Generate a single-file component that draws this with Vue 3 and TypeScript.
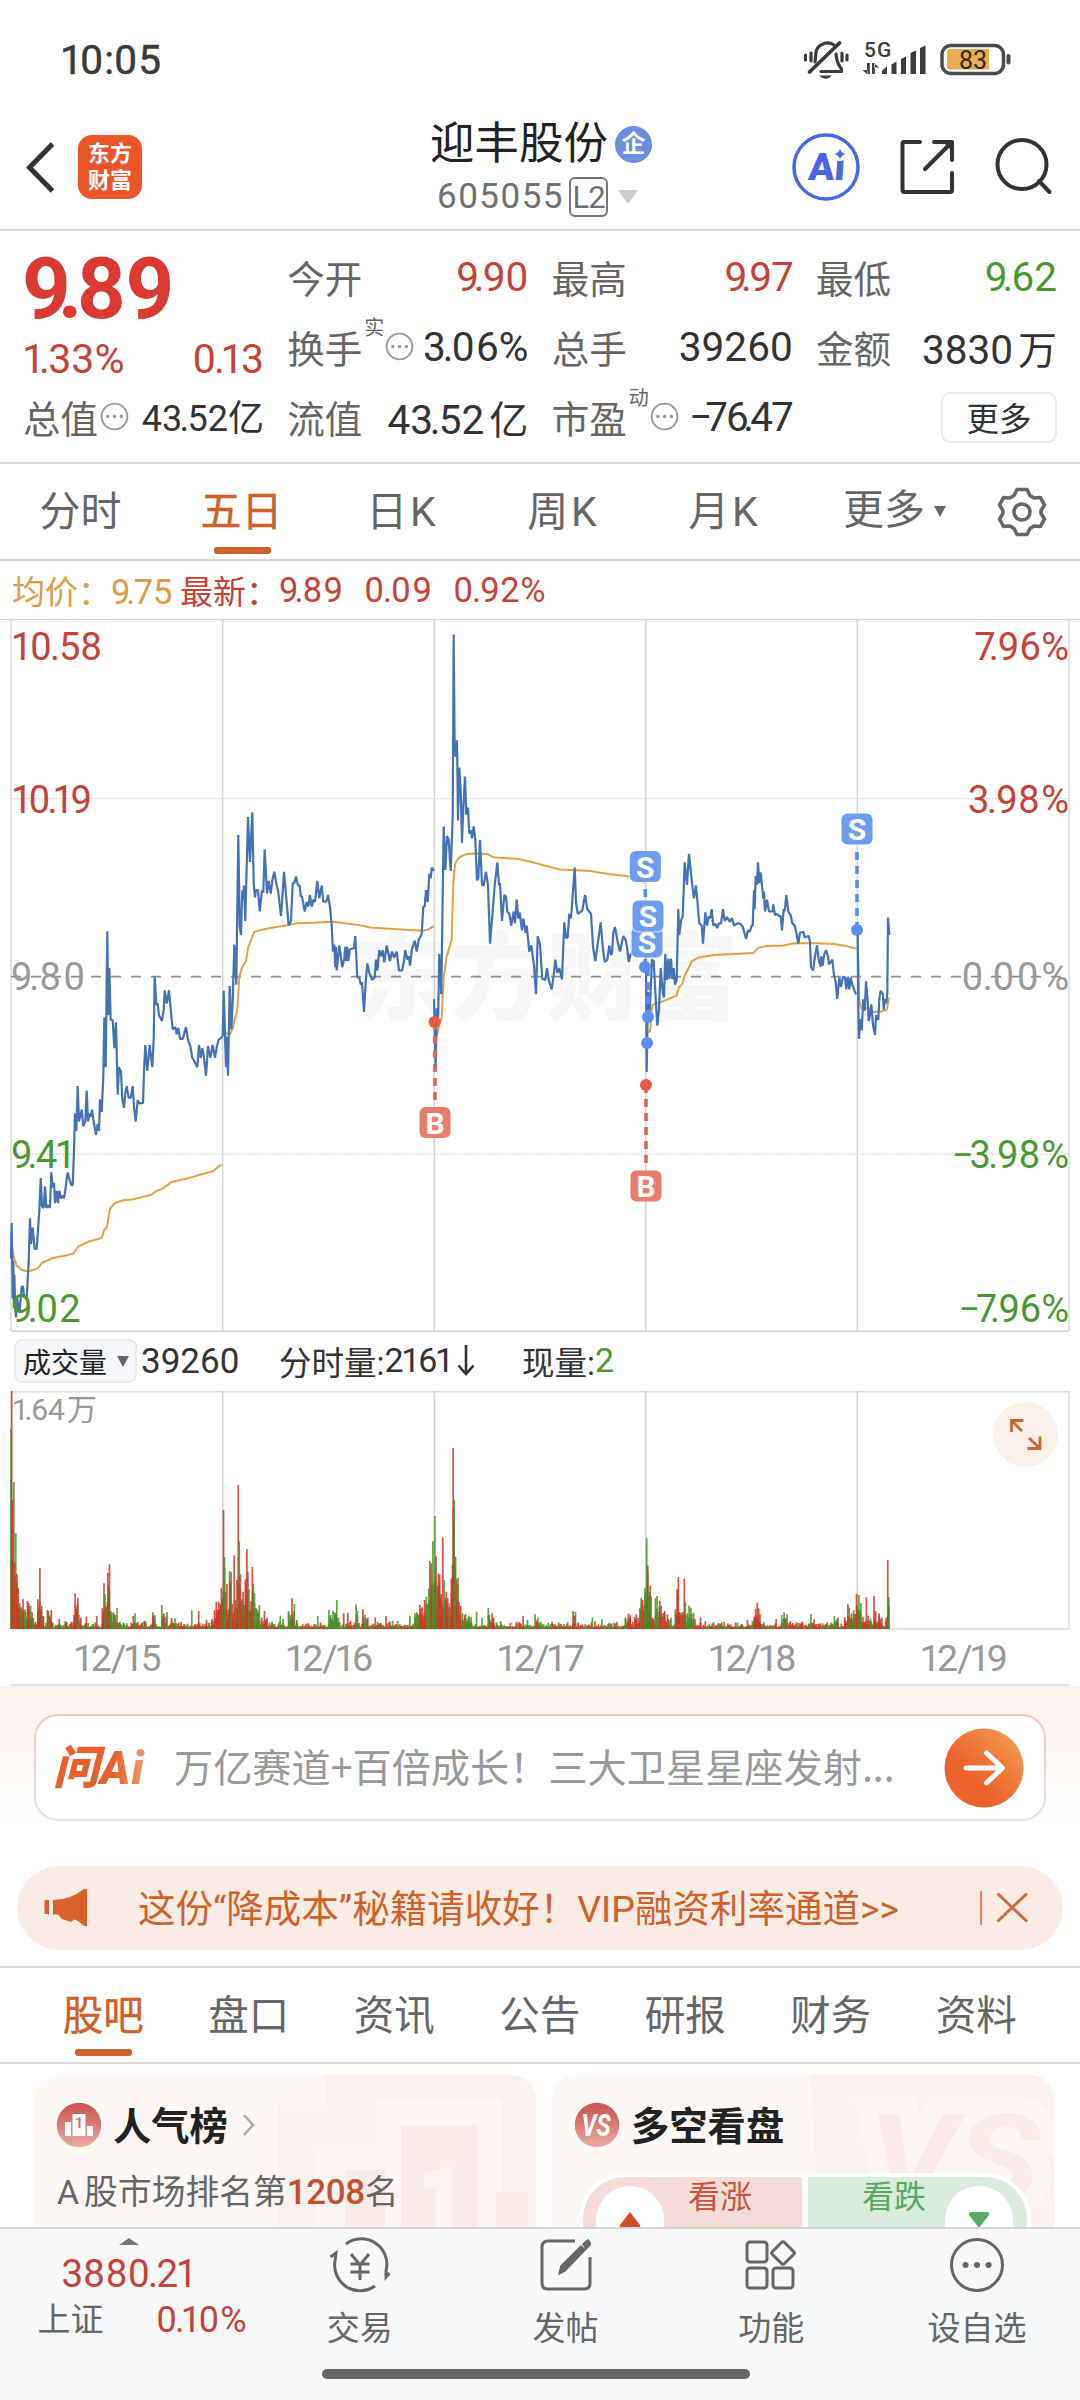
<script setup lang="ts">
import { h, type FunctionalComponent } from 'vue'

/* Tightens the gaps around decimal points and the digit one, in em. */
function kern(text: string): number[] {
  return [...text].map((c, i) => {
    const p = text[i - 1]
    if (!p) return 0
    let k = 0
    if (c === '.') k -= p === '7' ? 0.19 : p === '9' ? 0.13 : 0.08
    if (p === '.') k -= 0.04
    if (c === '1') k -= 0.065
    if (p === '1') k -= 0.065
    if (p === '0') k += 0.035
    if (p === '8') k += 0.02
    if (p === '−') k -= 0.12
    return k
  })
}

const Num: FunctionalComponent<{ v: string }> = (props) => {
  const ks = kern(props.v)
  return h(
    'span',
    { class: 'num' },
    [...props.v].map((c, i) => (ks[i] ? h('span', { style: { marginLeft: ks[i].toFixed(3) + 'em' } }, c) : c)),
  )
}
Num.props = ['v']

const dx = (text: string, size: number, extra = 0) =>
  kern(text).map((k, i) => (i ? k * size + extra : 0).toFixed(1)).join(' ')

/* Price lines: every day is a flat list of x,y pairs in plot units. */
const KX = 1 / 3
const KY = 1 / 2.119
function line(x0: number, raw: string): string {
  return raw
    .trim()
    .split(/\s+/)
    .map((p) => {
      const [x, y] = p.split(',').map(Number)
      return (x0 + x * KX).toFixed(1) + ',' + (600 + y * KY).toFixed(1)
    })
    .join(' ')
}

const priceLines = [
  line(0, `33,1395 35,1320 38,1480 40,1400 42,1500 43,1430 46,1500 48,1520 52,1480 55,1500 58,1510 62,1480 65,1455 69,1455 72,1475 80,1480 86,1400 90,1310 93,1365 98,1330 104,1375 110,1375 114,1335 118,1295 122,1225 126,1285 131,1288 135,1243 139,1288 144,1283 150,1288 154,1213 158,1245 162,1235 165,1278 170,1252 174,1278 178,1252 183,1268 188,1262 192,1268 197,1245 200,1225 203,1213 210,1232 215,1240 218,1240 222,1165 225,1088 229,1125 233,1030 237,1105 245,1080 250,1115 256,1105 260,1040 264,1105 269,1088 272,1095 276,1080 281,1105 288,1133 293,1110 297,1125 300,1058 305,1085 310,1010 313,885 317,990 322,702 325,880 328,780 332,890 338,890 343,950 348,895 353,1048 357,990 363,1000 367,1058 372,1076 376,1045 380,1030 386,1055 392,1055 398,1030 402,1075 407,1105 413,1060 418,1066 429,1066 432,1000 436,943 442,998 449,943 457,990 461,930 464,798 469,858 473,855 477,880 486,892 491,868 494,827 500,855 507,827 514,880 518,910 526,905 530,920 535,907 540,930 548,930 558,905 565,935 571,945 577,970 585,980 592,990 597,943 602,970 607,950 612,970 618,1008 624,945 631,970 638,943 645,970 651,945 656,932 668,925`),
  line(0, `668,925 671,828 678,990 680,925 684,1008 689,818 694,910 698,850 703,730 709,815 715,498 719,690 723,710 727,615 730,635 732,605 736,680 744,460 750,555 757,450 761,600 765,630 768,615 774,615 779,660 786,615 790,620 794,528 801,622 806,595 812,622 818,590 823,576 830,605 834,615 843,670 848,620 852,576 858,625 866,690 873,680 878,600 883,600 888,586 894,605 899,605 902,628 906,628 914,660 920,640 925,650 930,625 935,650 940,635 945,640 952,595 958,632 965,605 970,640 980,638 984,625 990,650 995,690 999,745 1003,730 1006,778 1008,735 1010,785 1018,732 1027,778 1033,760 1036,735 1039,765 1042,735 1045,765 1050,740 1062,738 1066,712 1072,800 1078,800 1082,815 1086,810 1092,873 1097,810 1102,770 1108,790 1116,805 1124,800 1128,762 1132,785 1138,742 1143,755 1148,742 1153,768 1160,732 1170,765 1176,745 1182,758 1190,745 1197,785 1206,785 1212,765 1216,742 1222,762 1226,755 1230,775 1236,740 1244,722 1250,745 1256,720 1265,708 1270,650 1274,650 1278,615 1283,640 1288,580 1292,590 1295,567 1302,574`),
  line(400, `102,846 107,990 110,865 114,905 118,750 124,835 131,480 136,572 141,500 146,508 152,574 158,460 161,73 164,330 168,330 171,297 174,467 178,355 182,405 186,515 190,440 195,374 199,455 204,440 208,495 213,488 216,505 221,480 226,508 231,594 235,590 240,508 246,604 251,605 258,576 264,605 270,728 277,670 284,605 292,556 297,605 300,600 306,680 313,625 318,628 322,660 328,665 334,690 341,660 345,685 350,635 355,675 359,662 366,700 370,675 377,705 380,690 388,745 394,732 402,775 408,835 413,712 420,730 427,803 436,805 441,780 446,805 455,825 461,795 466,762 472,790 478,780 486,804 493,683 498,716 503,715 508,665 513,675 518,625 524,567 528,640 533,665 547,658 555,625 562,655 573,665 579,735 586,765 592,735 602,683 608,735 614,767 622,762 628,732 633,752 636,748 640,705 645,693 654,728 660,745 670,712 677,720 681,735 686,767 692,750 706,745 712,720 720,712 735,745`),
  line(400, `738,745 740,1000 744,830 748,890 756,762 761,765 766,830 772,902 777,868 782,780 788,830 792,842 796,750 800,805 805,760 808,803 813,760 817,803 821,780 825,815 830,805 835,655 838,710 843,680 848,670 854,556 861,604 867,538 876,600 882,632 888,605 898,685 905,690 909,728 916,662 921,690 926,670 930,675 935,655 940,690 946,686 951,695 957,685 963,685 969,655 974,680 981,672 990,682 996,674 1002,690 1012,685 1020,686 1028,692 1038,718 1044,700 1049,703 1055,690 1058,690 1062,615 1064,655 1067,585 1071,603 1074,556 1078,600 1082,577 1086,605 1090,632 1092,618 1095,660 1101,635 1107,660 1118,660 1120,645 1125,668 1130,665 1138,670 1142,670 1146,700 1151,655 1154,660 1159,625 1165,660 1172,668 1177,685 1184,690 1189,705 1195,728 1200,705 1210,703 1214,715 1226,712 1230,725 1233,778 1239,785 1245,755 1251,732 1256,762 1262,777 1264,755 1268,775 1273,750 1278,742 1284,755 1287,772 1297,762 1302,795 1307,810 1312,845 1318,800 1323,820 1329,798 1335,800 1339,825 1343,798 1348,825 1352,800 1357,815 1362,825 1368,836`),
  line(720, `413,700 415,860 417,930 420,888 425,912 430,846 434,870 438,808 443,850 446,892 450,880 454,857 459,900 465,922 468,880 475,890 478,845 482,828 489,835 491,868 495,845 499,855 502,835 504,673 508,710`),
]

const averageLines = [
  line(0, `35,1365 42,1395 50,1410 65,1420 85,1423 105,1418 115,1415 125,1405 155,1395 190,1390 220,1385 235,1370 265,1360 305,1352 313,1335 321,1328 330,1290 345,1278 370,1272 400,1270 455,1260 470,1252 485,1248 515,1233 560,1226 600,1218 640,1210 656,1200 665,1197`),
  line(0, `670,922 676,918 690,920 698,908 705,885 712,870 718,800 725,780 738,765 745,735 753,720 763,703 790,698 820,694 870,688 890,685 940,684 1000,682 1080,689 1110,694 1180,697 1270,701 1285,698 1302,691`),
  line(400, `110,925 118,900 125,885 131,800 140,755 155,720 160,600 165,560 175,547 195,539 215,537 262,538 280,545 355,549 395,555 430,562 480,571 570,574 630,581 680,585 720,593 735,600`),
  line(400, `742,915 750,915 757,858 790,850 830,838 836,822 848,812 855,795 876,765 895,758 940,752 1060,748 1075,737 1100,733 1150,732 1180,728 1230,727 1300,729 1330,732 1370,739`),
  line(720, `413,705 418,850 424,865 445,865 460,873 485,872 500,868 508,842`),
]

/* Volume bars: x, top and direction (r up, g down); quiet minutes are filled in between. */
const volumeA = `32,327,g 34,213,r 36,540,r 40,486,g 42,728,r 46,640,g 49,762,r 53,803,r 57,850,r 61,860,g 67,838,r 73,868,g 80,843,r 84,850,r 89,857,g 93,876,r 97,893,g 103,905,r 110,838,r 116,743,r 121,857,g 126,888,r 138,870,r 149,870,r 172,897,r 190,903,r 207,905,r 215,885,r 218,820,r 226,833,r 229,885,g 235,893,r 251,890,r 281,888,r 297,864,r 302,790,r 305,823,g 313,758,r 318,733,r 316,798,g 322,873,g 330,876,g 340,864,g 348,905,g 387,888,r 392,880,g 400,905,r 420,902,r 444,877,r 450,885,g 470,855,g 475,880,r 485,876,g 498,893,g 508,895,g 526,905,r 557,871,g 577,873,r 600,900,r 615,897,r 623,870,r 628,846,r 635,845,r 643,803,r 649,570,r 652,711,g 655,815,g 659,792,r 663,868,r 667,753,r 671,757,g 675,852,r 680,706,r 684,840,g 688,780,r 692,495,r 695,664,g 698,763,r 703,838,g 706,815,r 710,855,g 713,778,r 717,687,r 720,757,r 723,808,g 729,843,r 733,741,r 736,792,g 739,820,g 743,864,g 747,868,g 753,855,g 760,893,r 768,873,r 775,893,r 790,905,g 814,887,g 822,897,g 838,873,g 848,835,r 855,852,g 862,900,g 923,888,g 955,870,g 960,885,g 967,873,g 978,840,g 983,893,g 998,880,r 1010,878,r 1018,903,r 1034,853,g 1038,873,g 1054,868,r 1060,885,g 1068,893,r 1090,892,r 1121,888,r 1140,902,g 1155,903,g 1190,888,g 1205,880,g 1210,877,g 1219,855,r 1226,862,r 1233,840,r 1238,830,g 1245,806,g 1248,723,g 1252,730,r 1257,664,g 1263,588,g 1266,709,r 1270,797,g 1273,760,r 1277,764,r 1281,822,r 1286,652,r 1290,780,g 1296,815,r 1300,835,r 1305,850,g 1311,775,r 1314,735,r 1316,384,r 1319,538,g 1323,710,g 1326,778,r 1330,773,g 1333,846,r 1338,857,r 1343,880,g 1352,882,g 1361,887,g 1368,890,g 1384,875,g 1400,893,g 1418,864,g 1429,880,r 1433,893,r 1454,903,g 1500,905,r 1519,888,r 1532,900,g 1554,883,g 1562,893,g`
const volumeB = `2,905,g 35,905,r 96,873,r 103,876,g 152,893,g 180,898,g 215,908,g 248,892,g 257,880,r 262,885,r 275,890,r 280,883,r 290,865,r 294,834,g 298,840,r 305,803,g 310,655,g 313,736,r 316,815,g 320,797,r 323,830,g 328,893,r 335,835,g 340,828,g 348,842,r 352,857,r 362,873,r 370,883,r 380,893,g 393,868,g 398,808,r 402,771,r 405,876,r 415,876,r 419,776,r 422,846,g 428,880,g 433,857,g 438,863,g 446,878,g 450,898,r 466,892,r 480,903,r 500,910,r 545,910,g 568,908,r 603,900,r 617,903,g 622,890,r 626,866,r 631,848,r 635,865,r 639,883,r 650,905,g 686,897,r 702,885,g 709,877,g 713,893,r 718,883,g 727,903,r 750,908,g 761,905,r 787,883,g 796,898,r 815,910,r 845,908,g 855,888,g 865,893,r 885,892,r 894,853,r 898,863,g 905,880,r 911,871,g 919,822,r 926,825,g 932,850,g 938,890,r 948,832,r 953,887,r 960,895,g 970,827,r 975,873,r 985,880,r 993,893,r 1005,893,r 1010,720,r 1013,832,g`

interface Bar { x: number; y: number; up: boolean }
const peaks: Bar[] = [
  ...volumeA.split(' ').map((s) => ({ s, x0: 0 })),
  ...volumeB.split(' ').map((s) => ({ s, x0: 540 })),
]
  .map(({ s, x0 }) => {
    const [x, y, c] = s.split(',')
    return { x: x0 + Number(x) / 2.904, y: 1320 + Number(y) / 3, up: c === 'r' }
  })
  .sort((a, b) => a.x - b.x)

let seed = 7
const rand = () => {
  seed = (seed * 16807) % 2147483647
  return seed / 2147483647
}
const BASE = 1629
const bars: Bar[] = []
for (let x = 11.5, i = 0; x < 889; x += 0.88) {
  while (i < peaks.length - 2 && peaks[i + 1].x < x) i++
  const a = peaks[i]
  const b = peaks[i + 1]
  const near = b.x - a.x < 4
  const env = near ? (BASE - Math.max(a.y, b.y)) * (0.35 + 0.6 * rand()) : 2 + 6 * rand() * rand()
  bars.push({ x, y: BASE - env, up: rand() > 0.42 })
}
bars.push(...peaks)
const gaps = [222.7, 434.3, 645.8, 857.3]

const axis = [
  { y: 659.5, l: '10.58', le: 0.3, r: '7.96%', re: 0.4, c: '#c5423a' },
  { y: 813, l: '10.19', le: -1, r: '3.98%', re: 0.7, c: '#c5423a' },
  { y: 990, l: '9.80', le: 1.8, r: '0.00%', re: 1.5, c: '#999999' },
  { y: 1167.5, l: '9.41', le: 0, r: '−3.98%', re: 0.3, c: '#4b9733' },
  { y: 1321.5, l: '9.02', le: 0.2, r: '−7.96%', re: 0, c: '#4b9733' },
]
const sells = [
  { x: 857, y: 829 },
  { x: 647, y: 942 },
  { x: 648, y: 916 },
  { x: 645.3, y: 866.5 },
]
const buys = [{ x: 435, y: 1122.5 }, { x: 646, y: 1186 }]
const dates = ['12/15', '12/16', '12/17', '12/18', '12/19']
const periods = ['分时', '五日', '日K', '周K', '月K']
const sections = ['股吧', '盘口', '资讯', '公告', '研报', '财务', '资料']
</script>

<template>
  <div class="app">
    <div class="status">
      <Num class="time" v="10:05" />
      <svg width="216" height="44" viewBox="800 38 216 44">
        <g fill="none" stroke="#3c3c3c" stroke-width="3.200" stroke-linecap="round" stroke-linejoin="round">
          <path d="M815 62 C816 54 815 48 821 45 C825 42.500 830 42.500 834 45 M836 54 C837 62 838 64 841.500 69 L841.500 71.500 H821" />
          <path d="M839.500 43 L809.500 72" stroke-width="3.800" />
          <path d="M811 53 V61 M805.500 55 V60 M842 53 V61 M847 55 V60" />
        </g>
        <path d="M819 75.500 H832 Q826 82 819 75.500Z" fill="#3c3c3c" />
        <text x="864" y="57" class="fiveg">5G</text>
        <g fill="#3c3c3c">
          <path d="M867 63h2.800v11h-2.800zM862.500 70l5 4.500v-4.500zM872 63h2.800v11h-2.800zM879 67.500l-5-4.500v4.500z" />
          <path d="M882 71l5-5v8h-5zM891.500 64.500l5-3v12.500h-5zM901 59l5-2.500v17.500h-5zM910.500 53l5.500-2.500v23.500h-5.500zM920 48l5.500-2.500v28.500h-5.500z" />
        </g>
        <rect x="942" y="45.500" width="61.500" height="28" rx="9" fill="#fff" stroke="#4b4b4b" stroke-width="3.500" />
        <path d="M950 49h39v20.500h-39q-3 0-3-3v-14.500q0-3 3-3z" fill="#e9ad54" />
        <path d="M1008.500 56v6.500" stroke="#4b4b4b" stroke-width="4" stroke-linecap="round" />
        <text x="973" y="69" text-anchor="middle" class="pct">83</text>
      </svg>
    </div>

    <header class="head">
      <svg class="back" width="30" height="56" viewBox="25 139 30 56"><path d="M52.500 144 L29.500 167.500 L52.500 191" fill="none" stroke="#333" stroke-width="5" /></svg>
      <div class="logo"><span>东方</span><span>财富</span></div>
      <div class="title">
        <div class="name">迎丰股份<span class="qi">企</span></div>
        <div class="code"><span class="digits">605055</span><span class="l2">L2</span><i class="tri"></i></div>
      </div>
      <svg class="tools" width="270" height="80" viewBox="790 127 270 80">
        <circle cx="826" cy="167" r="32" fill="none" stroke="#4767e6" stroke-width="3.500" />
        <text transform="translate(826 180) skewX(-4)" text-anchor="middle" class="aitext">Ai</text>
        <circle cx="840" cy="154" r="7" fill="#fff" />
        <path d="M840 148.500 Q841 153 845.500 154 Q841 155 840 159.500 Q839 155 834.500 154 Q839 153 840 148.500Z" fill="#4767e6" />
        <g fill="none" stroke="#333" stroke-width="4" stroke-linejoin="round" stroke-linecap="round">
          <path d="M920 142 H904 Q902.500 142 902.500 144 V190 Q902.500 192 904.500 192 H950 Q952 192 952 190 V173" /><path d="M934 142 H952 V160 M952 142 L925 169" />
          <circle cx="1022" cy="164.500" r="24.500" /><path d="M1039 181 L1049.500 192" />
        </g>
        <path d="M943 142H952V151Z" fill="#333" />
      </svg>
    </header>

    <section class="quote">
      <div class="qcol first">
        <div class="big"><Num v="9.89" /></div>
        <div class="chg red"><Num v="1.33%" /><Num v="0.13" /></div>
        <div class="row small"><label>总值<svg class="info" viewBox="0 0 30 30"><circle cx="15" cy="15" r="13.300" /><path d="M8 15h.1M15 15h.1M22 15h.1" /></svg></label><b><Num v="43.52" />亿</b></div>
      </div>
      <div class="qcol">
        <div class="row"><label>今开</label><b class="red"><Num v="9.90" /></b></div>
        <div class="row"><label>换手<sup>实</sup><svg class="info far" viewBox="0 0 30 30"><circle cx="15" cy="15" r="13.300" /><path d="M8 15h.1M15 15h.1M22 15h.1" /></svg></label><b><Num v="3.06%" /></b></div>
        <div class="row"><label>流值</label><b><Num v="43.52" /><u>亿</u></b></div>
      </div>
      <div class="qcol">
        <div class="row"><label>最高</label><b class="red nine"><Num v="9.97" /></b></div>
        <div class="row"><label>总手</label><b>39260</b></div>
        <div class="row"><label>市盈<sup>动</sup><svg class="info far" viewBox="0 0 30 30"><circle cx="15" cy="15" r="13.300" /><path d="M8 15h.1M15 15h.1M22 15h.1" /></svg></label><b class="tight"><Num v="−76.47" /></b></div>
      </div>
      <div class="qcol">
        <div class="row"><label>最低</label><b class="green"><Num v="9.62" /></b></div>
        <div class="row"><label>金额</label><b>3830<u>万</u></b></div>
        <div class="row end"><button class="more">更多</button></div>
      </div>
    </section>

    <nav class="periods">
      <div v-for="(p, i) in periods" :key="p" class="tab" :class="{ on: i === 1, wide: i > 1 }">{{ p }}</div>
      <div class="moretab"><span>更多</span><i class="tri dark"></i></div>
      <svg class="gear" width="52" height="52" viewBox="-26 -26 52 52">
        <path d="M-5 -22.500 H5 L8 -16.500 L12 -14 L18.500 -14.500 L22.500 -7 L19 -1.500 V1.500 L22.500 7 L18.500 14.500 L12 14 L8 16.500 L5 22.500 H-5 L-8 16.500 L-12 14 L-18.500 14.500 L-22.500 7 L-19 1.500 V-1.500 L-22.500 -7 L-18.500 -14.500 L-12 -14 L-8 -16.500Z" />
        <circle r="8" />
      </svg>
    </nav>

    <div class="legend">
      <span class="avg"><em>均价：</em><Num v="9.75" /></span>
      <span class="last red"><em>最新：</em><Num v="9.89" /><Num v="0.09" /><Num v="0.92%" /></span>
    </div>

    <svg class="plot" width="1080" height="713" viewBox="0 619 1080 713">
      <text x="546" y="1012" text-anchor="middle" class="mark">东方财富</text>
      <g stroke="#d4d4d4" stroke-width="1.500">
        <path d="M0 619.500 H1080 M11 1331.300 H1069" />
        <path v-for="x in gaps" :key="x" :d="`M${x} 620V1331`" />
        <path d="M11 620V1331M1069 620V1331" stroke="#e2e2e2" stroke-width="2" />
        <path d="M11 798.700H1069M11 1154.200H1069" stroke-dasharray="1.500 1.500" stroke-width="1.200" />
      </g>
      <path d="M11 976.600H1069" stroke="#8c8c8c" stroke-width="1.600" stroke-dasharray="10 10" />
      <polyline v-for="(l, i) in averageLines" :key="'a' + i" :points="l" fill="none" stroke="#e0a246" stroke-width="2" />
      <polyline v-for="(l, i) in priceLines" :key="'p' + i" :points="l" fill="none" stroke="#4472b5" stroke-width="2.200" stroke-linejoin="bevel" />
      <g stroke-width="3.600" stroke-dasharray="8 6">
        <path d="M435 1022V1105M646 1085V1168" stroke="#dd6552" />
        <path d="M857 852V930M645.300 889V965M648 968V1017" stroke="#5b8def" />
      </g>
      <g fill="#e35b47"><circle cx="434.500" cy="1022" r="6" /><circle cx="646" cy="1085" r="6" /></g>
      <g fill="#5b8fef"><circle cx="857" cy="930" r="6" /><circle cx="645" cy="967" r="6" /><circle cx="648" cy="1017" r="6" /><circle cx="647" cy="1043" r="6" /></g>
      <g v-for="(s, i) in sells" :key="'s' + i">
        <rect :x="s.x - 16.500" :y="s.y - 16.500" width="33" height="33" rx="7" fill="#fff" opacity=".7" />
        <rect :x="s.x - 15.500" :y="s.y - 15.500" width="31" height="31" rx="6" fill="#6c9df1" />
        <text :x="s.x" :y="s.y + 11" text-anchor="middle" class="flag">S</text>
      </g>
      <g v-for="(s, i) in buys" :key="'b' + i">
        <rect :x="s.x - 15.500" :y="s.y - 15.500" width="31" height="31" rx="6" fill="#e87d6d" />
        <text :x="s.x" :y="s.y + 11" text-anchor="middle" class="flag">B</text>
      </g>
      <g v-for="a in axis" :key="a.l" class="axis" :fill="a.c">
        <text x="11" :y="a.y" :dx="dx(a.l, 38, a.le)">{{ a.l }}</text>
        <text x="1069" :y="a.y" :dx="dx(a.r, 38, a.re)" text-anchor="end">{{ a.r }}</text>
      </g>
    </svg>

    <div class="volbar">
      <button class="volbtn">成交量<i class="tri dark"></i></button>
      <span class="v1">39260</span>
      <span class="v2">分时量:<Num v="2161" /><svg width="18" height="34" viewBox="0 0 18 34"><path d="M9 2V31M1.500 22.500L9 31L16.500 22.500" fill="none" stroke="#333" stroke-width="2.600" /></svg></span>
      <span class="v3">现量:<span class="green">2</span></span>
    </div>

    <svg class="plot" width="1080" height="240" viewBox="0 1391 1080 240">
      <g stroke="#dedede" stroke-width="1.500">
        <path d="M11 1391.700H1069M11 1629H1069M11 1391V1629M1069 1391V1629" />
        <path v-for="x in gaps" :key="x" :d="`M${x} 1391V1629`" stroke="#d0d0d0" />
      </g>
      <path v-for="(b, i) in bars" :key="i" :d="`M${b.x.toFixed(1)} 1629V${b.y.toFixed(1)}`" :stroke="b.up ? '#cf3527' : '#3f9426'" stroke-width="1.700" opacity=".85" />
      <text x="12" y="1420" class="vmax"><tspan :dx="dx('1.64', 30)">1.64</tspan><tspan dx="2">万</tspan></text>
      <circle cx="1025.500" cy="1434.500" r="32.500" fill="#fbf1eb" />
      <path d="M1011.500 1432V1420.500H1023.500M1011.500 1420.500L1022 1431M1029 1438L1040 1448.500M1040 1436.500V1448.500H1027.500" fill="none" stroke="#cb6331" stroke-width="2.800" />
    </svg>
    <div class="dates"><span v-for="d in dates" :key="d"><Num :v="d" /></span></div>

    <section class="ask">
      <div class="askbox">
        <span class="asklogo">问Ai</span>
        <span class="asktext">万亿赛道+百倍成长！三大卫星星座发射...</span>
        <svg width="80" height="80" viewBox="0 0 80 80">
          <defs><linearGradient id="go" x1=".2" y1=".8" x2=".9" y2=".1"><stop offset=".25" stop-color="#ec632c" /><stop offset="1" stop-color="#f29a50" /></linearGradient></defs>
          <circle cx="40" cy="40" r="39.500" fill="url(#go)" />
          <path d="M22 40H58M42.500 25L58.500 40L42.500 55" fill="none" stroke="#fff" stroke-width="5" stroke-linecap="round" stroke-linejoin="round" />
        </svg>
      </div>
    </section>

    <div class="banner">
      <svg width="46" height="40" viewBox="43 1888 46 40" fill="#d9622b"><path d="M44.500 1900h4.500v14h-4.500zM53 1900Q70 1900 84 1889H87V1926H84Q78 1920 74 1919.500L71 1922L62 1919L58 1914.500H53Z" /></svg>
      <span>这份“降成本”秘籍请收好！VIP融资利率通道&gt;&gt;</span>
      <svg width="50" height="36" viewBox="979 1890 50 36" fill="none" stroke="#d06a38"><path d="M981 1891V1925" stroke-width="1.500" /><path d="M997.500 1893.500L1027 1921.500M1027 1893.500L997.500 1921.500" stroke-width="3" /></svg>
    </div>

    <nav class="sections">
      <div v-for="(s, i) in sections" :key="s" class="tab" :class="{ on: i === 0 }">{{ s }}</div>
    </nav>

    <div class="cards">
      <div class="card">
        <svg class="art" width="502" height="152" viewBox="34 2075 502 152">
          <path d="M278 2227V2105H326V2075H536V2227Z" fill="#fbf2f0" />
          <path d="M316 2227V2151H376V2098H502V2227Z" fill="#fdf6f4" />
          <path d="M401 2125H478V2227H401ZM345 2170H385V2227H345ZM496 2192H528V2227H496Z" fill="#faebe9" />
          <path d="M424 2174L452 2166V2227H436V2186L424 2190Z" fill="#fdf4f2" />
        </svg>
        <div class="ctitle">
          <svg width="46" height="46" viewBox="0 0 46 46">
            <defs><linearGradient id="badge" x1="0" y1="0" x2="0" y2="1"><stop offset=".1" stop-color="#cb5a53" /><stop offset="1" stop-color="#eaaba6" /></linearGradient></defs>
            <circle cx="23" cy="23" r="22.300" fill="url(#badge)" />
            <path d="M9 20H15V34H9ZM31 24H37V34H31ZM16.500 12H29.500V34H16.500Z" fill="#fff" /><text x="23" y="26" text-anchor="middle" class="one">1</text>
          </svg>
          <span>人气榜</span>
          <svg class="chev" width="14" height="24" viewBox="0 0 14 24"><path d="M2 2L11 12L2 22" fill="none" stroke="#aaa" stroke-width="2.500" /></svg>
        </div>
        <div class="rank">A<span class="cn">股市场排名第</span><strong>1208</strong>名</div>
      </div>
      <div class="card">
        <svg class="art" width="502" height="152" viewBox="552 2075 502 152">
          <path d="M810 2075H1054V2227H820Z" fill="#fbf2f0" />
          <text x="868" y="2201" class="bigvs" textLength="172" lengthAdjust="spacingAndGlyphs">VS</text>
        </svg>
        <div class="ctitle">
          <svg width="46" height="46" viewBox="0 0 46 46"><circle cx="23" cy="23" r="22.300" fill="url(#badge)" /><text x="22" y="34" text-anchor="middle" class="vs" textLength="29" lengthAdjust="spacingAndGlyphs">VS</text></svg>
          <span>多空看盘</span>
        </div>
        <div class="pill">
          <div class="up"><i class="knob"><svg width="22" height="18" viewBox="0 0 22 18"><path d="M11 1L21 14Q22 17 19 17H3Q0 17 1 14Z" fill="#cf4f2b" /></svg></i>看涨</div>
          <div class="down">看跌<i class="knob"><svg width="22" height="18" viewBox="0 0 22 18"><path d="M11 17L21 4Q22 1 19 1H3Q0 1 1 4Z" fill="#58aa64" /></svg></i></div>
        </div>
      </div>
    </div>

    <footer class="foot">
      <div class="index">
        <i class="tri up"></i>
        <div class="val red"><Num v="3880.21" /></div>
        <div class="sub"><span>上证</span><Num class="red" v="0.10%" /></div>
      </div>
      <div class="item">
        <svg viewBox="-30 -30 60 60"><path d="M-14 -21A25.500 25.500 0 0 1 26 6L26 12L29.500 8M15 21A25.500 25.500 0 0 1 -25 -4L-24 -12L-29.500 -8M-9 -11L0 0L9 -11M0 0V15M-9.500 -1H9.500M-9.500 7H9.500" /></svg>交易
      </div>
      <div class="item">
        <svg viewBox="-30 -30 60 60"><path d="M9 -24H-18Q-24 -24 -24 -18V18Q-24 24 -18 24H18Q24 24 24 18V-8" /><path d="M-7 9L-5 1L15 -19L19 -15L-1 6ZM17 -21L22 -25Q25 -23 24 -20L20 -16Z" fill="#666" stroke-width="1.500" /></svg>发帖
      </div>
      <div class="item">
        <svg viewBox="-30 -30 60 60"><rect x="-24" y="-23" width="20" height="20" rx="3" /><rect x="-24" y="3" width="20" height="20" rx="3" /><rect x="2" y="3" width="20" height="20" rx="3" /><path d="M10.500 -22.500Q12 -24 13.500 -22.500L23 -13Q24 -12 23 -11L13.500 -1.500Q12 0 10.500 -1.500L1 -11Q0 -12 1 -13Z" /></svg>功能
      </div>
      <div class="item">
        <svg viewBox="-30 -30 60 60"><circle r="25.500" /><path d="M-11.500 0h.1M0 0h.1M11.500 0h.1" stroke-width="6" stroke-linecap="round" /></svg>设自选
      </div>
      <div class="home"></div>
    </footer>
  </div>
</template>

<style>
html, body { margin: 0; background: #fff; }
.num { display: inline-block; white-space: nowrap; }
</style>

<style scoped>
* { box-sizing: border-box; }
.app { width: 1080px; height: 2400px; overflow: hidden; display: flex; flex-direction: column; background: #fff; color: #333; font-family: Roboto, "Noto Sans CJK SC", sans-serif; font-kerning: none; }
.app > * { flex: none; }
.red { color: #c5423a; }
.green { color: #4b9733; }
svg text { font-family: Roboto, "Noto Sans CJK SC", sans-serif; font-kerning: none; }
.status { height: 120px; display: flex; justify-content: space-between; align-items: center; padding: 0 64px 0 60px; }
.time { font-size: 40.500px; color: #3a3a3a; -webkit-text-stroke: .5px #3a3a3a; }
.fiveg { font-size: 21px; font-weight: 500; fill: #3c3c3c; letter-spacing: 1px; }
.pct { font-size: 25px; fill: #2f2a20; }
.head { height: 111px; border-bottom: 2px solid #d9d9d9; display: flex; align-items: center; padding: 0 20px 16px 25px; position: relative; }
.aitext { font-size: 38px; font-weight: 900; fill: #4767e6; }
.logo { width: 64px; height: 64px; border-radius: 14px; background: #ea5628; color: #fff; margin-left: 23px; font-size: 22px; font-weight: 700; line-height: 27px; display: flex; flex-direction: column; align-items: center; justify-content: center; }
.title { flex: 1; display: flex; flex-direction: column; padding-left: 288px; padding-top: 6px; }
.name { font-size: 44.500px; line-height: 54px; color: #222; display: flex; align-items: center; }
.qi { width: 37px; height: 37px; border-radius: 50%; background: #6c8de0; color: #fff; font-size: 24px; line-height: 36px; text-align: center; font-weight: 700; margin-left: 7px; }
.code { display: flex; align-items: center; font-size: 35px; line-height: 50px; color: #707070; padding: 1px 0 0 7px; }
.digits { letter-spacing: 1.5px; }
.l2 { width: 39px; height: 40px; border: 2px solid #777; border-radius: 6px; font-size: 31px; line-height: 37px; text-align: center; letter-spacing: -1px; margin-left: 5px; }
.tri { border: 10px solid transparent; border-top: 14px solid #ccc; border-bottom: 0; margin-left: 10px; }
.tri.dark { border-width: 11px 6.5px 0; border-top-color: #666; margin-left: 10px; }
.quote { height: 233px; border-bottom: 2px solid #d9d9d9; padding: 11px 23px 0 24px; display: flex; justify-content: space-between; }
.qcol { width: 240px; }
.row { height: 70px; display: flex; justify-content: space-between; align-items: center; font-size: 40.500px; white-space: nowrap; }
.row label { font-size: 37.5px; color: #666; position: relative; top: -1px; left: -1px; display: flex; align-items: center; }
.row b { font-weight: 400; }
.row b.nine { letter-spacing: -1px; }
.row b.tight { margin-right: 1px; letter-spacing: -2.1px; }
.row u { text-decoration: none; margin-left: 5px; font-size: 39px; }
.row.small { font-size: 36px; }
.row.small b { position: relative; top: -2px; }
.row sup { position: absolute; left: 77px; top: -1px; font-size: 20px; line-height: 20px; }
.info { width: 29px; height: 29px; fill: none; stroke: #999; stroke-width: 2; margin-left: 2px; }
.info path { stroke-width: 3.4; stroke-linecap: round; }
.info.far { margin-left: 23px; }
.big { height: 92px; line-height: 94px; font-size: 85px; font-weight: 700; color: #db3a32; margin-left: -2px; letter-spacing: -2px; }
.chg { height: 48px; line-height: 50px; font-size: 41px; display: flex; justify-content: space-between; margin-left: -2px; }
.row.end { justify-content: flex-end; }
.more { width: 116px; height: 51px; border: 2px solid #ebebeb; border-radius: 9px; background: #fff; font: 32.500px/44px "Noto Sans CJK SC", sans-serif; color: #333; padding: 0; }
.periods { height: 97px; border-bottom: 2px solid #d9d9d9; display: flex; align-items: center; font-size: 41px; color: #666; }
.tab { position: relative; width: 161px; text-align: center; line-height: 96px; }
.tab.wide { letter-spacing: 3px; }
.tab.on { color: #cf6029; -webkit-text-stroke: .4px #cf6029; }
.tab.on::after { content: ""; position: absolute; left: 50%; bottom: 6px; width: 57px; height: 7px; border-radius: 3px; margin-left: -28px; background: #cf6029; }
.moretab { margin-left: 38px; width: 146px; display: flex; align-items: center; }
.moretab span { line-height: 96px; margin-top: -4px; }
.moretab .tri { margin-left: 9px; }
.gear { margin-left: 7px; fill: none; stroke: #666; stroke-width: 3.6; stroke-linejoin: round; }
.legend { height: 58px; display: flex; align-items: center; padding-left: 12px; font-size: 34.500px; }
.legend em { font-style: normal; font-size: 33px; }
.legend .avg { color: #dd9c46; width: 168px; white-space: nowrap; }
.legend .last { white-space: nowrap; display: flex; align-items: center; }
.last .num { letter-spacing: .6px; }
.last .num + .num { margin-left: 21px; }
.plot { display: block; }
.mark { font-size: 96px; font-weight: 900; fill: #f7f7f7; }
.flag { font-size: 30px; font-weight: 700; fill: #fff; }
.axis text { font-size: 38px; }
.volbar { height: 59px; display: flex; align-items: center; padding: 0 0 1px 14px; font-size: 35px; white-space: nowrap; }
.volbtn { width: 123px; height: 44px; border: 2px solid #e8eaee; border-radius: 8px; background: #f6f7fa; font: 28px/38px "Noto Sans CJK SC", sans-serif; color: #222; display: flex; align-items: center; padding: 0 0 0 7px; }
.v1 { margin-left: 4px; width: 138px; font-size: 35px; }
.v2, .v3 { font-size: 32.500px; display: flex; align-items: center; margin-top: -2px; }
.v2 { width: 243px; }
.v2 .num { font-size: 34px; }
.v2 svg { margin-left: 3px; }
.v3 .green { font-size: 34px; }
.vmax { font-size: 30px; fill: #999; }
.dates { margin: 0 11px; height: 55px; border-bottom: 2px solid #e3e3e3; display: flex; line-height: 54px; font-size: 37.500px; color: #999; letter-spacing: -1px; }
.dates span { flex: 1; text-align: center; }
.ask { height: 180px; padding: 28px 34px 0; background: linear-gradient(#fdf1ed, #fff 145px); }
.askbox { height: 107px; border: 2px solid transparent; border-radius: 24px; background: linear-gradient(#fff, #fff) padding-box, linear-gradient(#efc9bd, #e0e5ee) border-box; display: flex; align-items: center; padding: 0 20px 0 17px; }
.asklogo { width: 121px; font-size: 46px; line-height: 60px; font-weight: 900; font-style: italic; letter-spacing: 1px; color: transparent; background: linear-gradient(90deg, #e8602c 0 60px, #f0a070 95px); background-clip: text; white-space: nowrap; }
.asktext { flex: 1; font-size: 39.200px; line-height: 60px; margin-top: -5px; color: #999; white-space: nowrap; font-family: "Noto Sans CJK SC", sans-serif; }
.banner { margin: 0 17px 16px; height: 84px; border-radius: 42px; background: #faece4; display: flex; align-items: center; padding: 0 34px 0 26px; color: #cf6229; font-size: 37.500px; white-space: nowrap; }
.banner span { flex: 1; margin: -5px 0 0 49px; }
.sections { height: 98px; border-top: 2px solid #d9d9d9; border-bottom: 2px solid #d9d9d9; display: flex; padding-left: 30.500px; font-size: 40.500px; color: #666; }
.sections .tab { width: 145.500px; }
.cards { height: 163px; padding: 11px 26px 0 34px; display: flex; gap: 16px; overflow: hidden; }
.card { width: 502px; height: 180px; border-radius: 24px 24px 0 0; background: #fdf8f6; position: relative; overflow: hidden; }
.art { position: absolute; left: 0; top: 0; }
.ctitle { position: relative; display: flex; align-items: center; height: 54px; margin: 23px 0 0 22px; font-size: 38.300px; font-weight: 700; color: #222; }
.ctitle span { margin: -4px 0 0 11px; }
.ctitle .chev { margin-left: 14px; }
.one { font-size: 14px; font-weight: 700; fill: #d4736c; }
.vs { font-size: 31px; font-weight: 700; font-style: italic; fill: #fff; }
.bigvs { font-size: 122px; font-weight: 700; font-style: italic; fill: #faebe9; stroke: #fdf6f4; stroke-width: 34; paint-order: stroke; }
.rank { position: relative; margin: 16px 0 0 23px; font-size: 33.800px; line-height: 50px; color: #666; white-space: nowrap; }
.rank .cn { margin-left: 5px; }
.rank strong { font-weight: 500; color: #c4502f; font-size: 35px; letter-spacing: -.4px; }
.pill { position: relative; margin: 21px 0 0 27px; width: 452px; height: 94px; border: 4px solid #fff; border-radius: 46px; display: flex; overflow: hidden; gap: 6px; background: #fff; font-size: 32px; line-height: 40px; }
.pill .up { flex: 1; background: #f6dcd9; color: #c6553b; display: flex; gap: 24px; padding-left: 13px; }
.pill .down { flex: 1; background: #daeddd; color: #58a965; display: flex; gap: 19px; justify-content: flex-end; padding-right: 14px; }
.knob { width: 68px; height: 68px; border-radius: 50%; background: #fff; margin-top: 9px; display: flex; justify-content: center; padding-top: 25px; }
.foot { position: relative; height: 173px; border-top: 2px solid #d2d4d6; background: #f7f8fa; display: flex; color: #666; font-size: 33px; }
.index { width: 257px; display: flex; flex-direction: column; align-items: center; padding-top: 9px; }
.tri.up { border: 10px solid transparent; border-bottom: 7px solid #777; border-top: 0; margin: 0; }
.val { font-size: 38.500px; line-height: 44px; margin: 7px 0 0 2px; }
.sub { display: flex; justify-content: space-between; width: 209px; margin-left: 27px; line-height: 48px; font-size: 36px; }
.sub span:first-child { font-size: 33px; }
.item { width: 205.700px; display: flex; flex-direction: column; align-items: center; line-height: 44px; padding-top: 6px; }
.item svg { width: 60px; height: 60px; fill: none; stroke: #666; stroke-width: 3; margin-bottom: 12px; }
.home { position: absolute; left: 322px; top: 140px; width: 428px; height: 10px; border-radius: 5px; background: #666865; }
</style>
